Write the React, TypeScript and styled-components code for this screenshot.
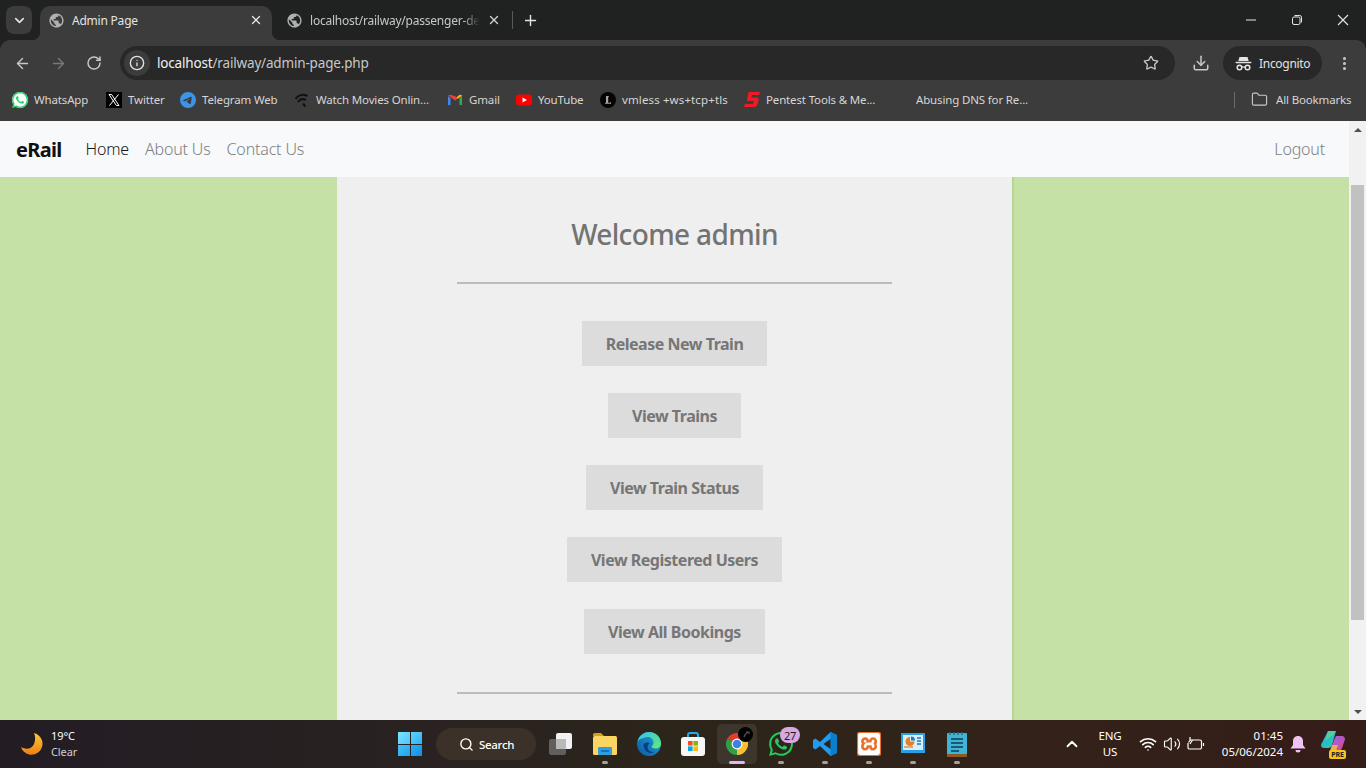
import React from 'react';
import styled, { createGlobalStyle } from 'styled-components';
import {
  ArrowLeft,
  ArrowRight,
  ChevronDown,
  ChevronUp,
  Download,
  Folder,
  Info,
  MoreVertical,
  Plus,
  RotateCw,
  Search,
  Star,
  Volume2,
  Wifi,
  X,
} from 'lucide-react';
import { MdPublic } from 'react-icons/md';
import { SiTelegram, SiWhatsapp, SiXampp } from 'react-icons/si';

const UI_FONT = '"Noto Sans", "Open Sans", sans-serif';

const GlobalStyle = createGlobalStyle`
  html, body {
    margin: 0;
    height: 100%;
    overflow: hidden;
    font-family: ${UI_FONT};
  }
  * {
    box-sizing: border-box;
  }
`;

const bookmarks = [
  { label: 'WhatsApp', width: 56, icon: <WhatsAppMark /> },
  { label: 'Twitter', width: 36, icon: <XMark /> },
  { label: 'Telegram Web', width: 76, icon: <SiTelegram size={16} color="#3a95e6" /> },
  { label: 'Watch Movies Onlin...', width: 115, icon: <WaveMark /> },
  { label: 'Gmail', width: 31, icon: <GmailMark /> },
  { label: 'YouTube', width: 46, icon: <YoutubeMark /> },
  { label: 'vmless +ws+tcp+tls', width: 106, track: 0.12, icon: <LetterMark /> },
  { label: 'Pentest Tools & Me...', width: 112, icon: <FiveMark /> },
  { label: 'Abusing DNS for Re...', width: 114, icon: <BlankMark /> },
];

const menuItems = [
  'Release New Train',
  'View Trains',
  'View Train Status',
  'View Registered Users',
  'View All Bookings',
];

export default function App() {
  return (
    <>
      <GlobalStyle />
      <Screen>
        <TabStrip>
          <TabSearch>
            <ChevronDown size={15} strokeWidth={2.6} color="#e3e3e3" />
          </TabSearch>
          <ActiveTab>
            <MdPublic size={17} color="#aeb0b2" />
            <TabTitle $active>Admin Page</TabTitle>
            <X size={14} strokeWidth={2.2} color="#e3e3e3" />
          </ActiveTab>
          <InactiveTab>
            <MdPublic size={17} color="#aeb0b2" />
            <TabTitle>localhost/railway/passenger-de</TabTitle>
            <X size={14} strokeWidth={2.2} color="#d8d8d8" />
          </InactiveTab>
          <TabDivider />
          <NewTab>
            <Plus size={17} strokeWidth={2} color="#e3e3e3" />
          </NewTab>
          <WindowControls>
            <WindowButton>
              <svg width="12" height="12" viewBox="0 0 12 12">
                <path d="M1 6h10" stroke="#e6e6e6" strokeWidth="1" />
              </svg>
            </WindowButton>
            <WindowButton>
              <svg width="12" height="12" viewBox="0 0 12 12" fill="none" stroke="#e6e6e6">
                <rect x="1.5" y="3" width="7.5" height="7.5" rx="1.5" />
                <path d="M3.5 1.5h5.2a1.8 1.8 0 0 1 1.8 1.8v5.2" />
              </svg>
            </WindowButton>
            <WindowButton>
              <svg width="12" height="12" viewBox="0 0 12 12">
                <path d="M1 1l10 10M11 1L1 11" stroke="#e6e6e6" strokeWidth="1.1" />
              </svg>
            </WindowButton>
          </WindowControls>
        </TabStrip>

        <Toolbar>
          <NavIcons>
            <ArrowLeft size={17} strokeWidth={2} color="#c7c7c7" />
            <ArrowRight size={17} strokeWidth={2} color="#787878" />
            <RotateCw size={16} strokeWidth={2.2} color="#c7c7c7" />
          </NavIcons>
          <Omnibox>
            <SiteInfo>
              <Info size={16} strokeWidth={2} color="#e3e3e3" />
            </SiteInfo>
            <UrlText>
              localhost<UrlDim>/railway/admin-page.php</UrlDim>
            </UrlText>
            <Star size={16} strokeWidth={2} color="#c7c7c7" />
          </Omnibox>
          <DownloadSlot>
            <Download size={18} strokeWidth={2} color="#c7c7c7" />
          </DownloadSlot>
          <IncognitoPill>
            <IncognitoMark />
            Incognito
          </IncognitoPill>
          <KebabSlot>
            <MoreVertical size={17} strokeWidth={2.4} color="#c7c7c7" />
          </KebabSlot>
        </Toolbar>

        <BookmarksBar>
          {bookmarks.map((b) => (
            <Bookmark key={b.label}>
              {b.icon}
              <BookmarkLabel $width={b.width} $track={b.track}>
                {b.label}
              </BookmarkLabel>
            </Bookmark>
          ))}
          <BookmarksEnd>
            <BarDivider />
            <Folder size={17} strokeWidth={1.6} color="#c7c7c7" />
            <BookmarkLabel $width={75}>All Bookmarks</BookmarkLabel>
          </BookmarksEnd>
        </BookmarksBar>

        <Viewport>
          <Page>
            <Navbar>
              <Brand>eRail</Brand>
              <NavLink $active>Home</NavLink>
              <NavLink>About Us</NavLink>
              <NavLink>Contact Us</NavLink>
              <LogoutLink>Logout</LogoutLink>
            </Navbar>
            <Main>
              <Panel>
                <Welcome>Welcome admin</Welcome>
                <Rule />
                <Menu>
                  {menuItems.map((item) => (
                    <MenuButton key={item}>{item}</MenuButton>
                  ))}
                </Menu>
                <Rule />
              </Panel>
            </Main>
          </Page>
          <Scrollbar>
            <ScrollArrow $up />
            <ScrollTrack>
              <ScrollThumb />
            </ScrollTrack>
            <ScrollArrow />
          </Scrollbar>
        </Viewport>

        <Taskbar>
          <Weather>
            <MoonMark />
            <WeatherText>
              <span>19°C</span>
              <WeatherSub>Clear</WeatherSub>
            </WeatherText>
          </Weather>
          <TaskCenter>
            <StartMark />
            <SearchPill>
              <Search size={15} strokeWidth={2.2} color="#fff" />
              Search
            </SearchPill>
            <TaskIcon>
              <TaskViewMark />
            </TaskIcon>
            <TaskIcon $running>
              <ExplorerMark />
            </TaskIcon>
            <TaskIcon>
              <EdgeMark />
            </TaskIcon>
            <TaskIcon>
              <StoreMark />
            </TaskIcon>
            <TaskIcon $running $focused>
              <ChromeMark />
              <IncognitoBadge>
                <svg width="12" height="12" viewBox="0 0 12 12">
                  <path d="M4 8c1-3 2-4 4-5M6 3h3v2" stroke="#555" strokeWidth="1.2" fill="none" />
                </svg>
              </IncognitoBadge>
            </TaskIcon>
            <TaskIcon $running>
              <SiWhatsapp size={24} color="#25c95f" />
              <CountBadge>27</CountBadge>
            </TaskIcon>
            <TaskIcon $running>
              <CodeMark />
            </TaskIcon>
            <TaskIcon $running>
              <XamppTile>
                <SiXampp size={22} color="#fff" />
              </XamppTile>
            </TaskIcon>
            <TaskIcon $running>
              <PanelMark />
            </TaskIcon>
            <TaskIcon $running>
              <NotepadMark />
            </TaskIcon>
          </TaskCenter>
          <Tray>
            <ChevronUp size={18} strokeWidth={2.4} color="#fff" />
            <LangBlock>
              <span>ENG</span>
              <span>US</span>
            </LangBlock>
            <TrayIcons>
              <Wifi size={18} strokeWidth={2.2} color="#fff" />
              <Volume2 size={18} strokeWidth={1.5} color="#fff" />
              <BatteryMark />
            </TrayIcons>
            <Clock>
              <span>01:45</span>
              <span>05/06/2024</span>
            </Clock>
            <BellSlot>
              <BellMark />
            </BellSlot>
            <CopilotSlot>
              <CopilotMark />
              <PreTag>PRE</PreTag>
            </CopilotSlot>
          </Tray>
        </Taskbar>
      </Screen>
    </>
  );
}

function WhatsAppMark() {
  return (
    <WhatsAppBack>
      <SiWhatsapp size={16} color="#25d366" />
    </WhatsAppBack>
  );
}

function XMark() {
  return (
    <svg width="16" height="16" viewBox="0 0 16 16">
      <rect width="16" height="16" fill="#000" />
      <path d="M3 2.5h2.6l7.4 11h-2.6zM12.5 2.5L3.5 13.5" stroke="#fff" strokeWidth="1" fill="none" />
    </svg>
  );
}

function WaveMark() {
  return (
    <svg width="16" height="16" viewBox="0 0 16 16" fill="none" stroke="#111" strokeWidth="2">
      <path d="M1.5 7c3-4.5 8-5 12-3" />
      <path d="M4 10c2-3 5-3.5 8-2" />
      <path d="M9 11.5l2.5 3" />
    </svg>
  );
}

function GmailMark() {
  return (
    <svg width="16" height="16" viewBox="0 0 16 16">
      <path d="M1 4v9h2.5V6.5z" fill="#4285f4" />
      <path d="M15 4v9h-2.5V6.5z" fill="#34a853" />
      <path d="M1 3.2L8 8.5l2-1.5V5L3.5 2.8z" fill="#ea4335" />
      <path d="M15 3.2L12.5 2.8 10 5v2l5-3z" fill="#fbbc04" />
    </svg>
  );
}

function YoutubeMark() {
  return (
    <svg width="16" height="16" viewBox="0 0 16 16">
      <rect y="2.5" width="16" height="11" rx="3" fill="#f00" />
      <path d="M6.5 5.5v5L11 8z" fill="#fff" />
    </svg>
  );
}

function LetterMark() {
  return (
    <svg width="16" height="16" viewBox="0 0 16 16">
      <circle cx="8" cy="8" r="8" fill="#050505" />
      <path d="M6 4h3v.8H8.2v6h2l.8-1.3v2.3H5v-1h1z" fill="#a5a5a5" />
    </svg>
  );
}

function FiveMark() {
  return (
    <svg width="16" height="17" viewBox="0 0 16 17">
      <path
        d="M4.5 1H16l-1 3H8l-.6 2.5H13c1.5 0 2 1 1.6 2.5l-1.2 4.5C13 15 12 16 10.5 16H0l1-3h8l.6-3H3z"
        fill="#ed1c24"
      />
    </svg>
  );
}

function BlankMark() {
  return <BlankIcon />;
}

function IncognitoMark() {
  return (
    <svg width="17" height="17" viewBox="0 0 17 17" fill="#e3e3e3">
      <path d="M4.5 2h8l1.2 4H3.3z" />
      <rect x="0.5" y="6.8" width="16" height="1.5" rx=".7" />
      <circle cx="4.5" cy="12.5" r="2.3" fill="none" stroke="#e3e3e3" strokeWidth="1.5" />
      <circle cx="12.5" cy="12.5" r="2.3" fill="none" stroke="#e3e3e3" strokeWidth="1.5" />
      <path d="M6.8 12h3.4" stroke="#e3e3e3" strokeWidth="1.2" />
    </svg>
  );
}

function MoonMark() {
  return (
    <svg width="24" height="24" viewBox="0 0 24 24">
      <defs>
        <linearGradient id="moon" x1="0" y1="0" x2="0" y2="1">
          <stop offset="0" stopColor="#fdc83a" />
          <stop offset="1" stopColor="#ee8012" />
        </linearGradient>
      </defs>
      <path d="M14 1a11 11 0 1 1-13 14c5 3 11 2 13-3 1.5-4 1.5-8 0-11z" fill="url(#moon)" />
    </svg>
  );
}

function StartMark() {
  return (
    <StartGrid>
      <StartPane $from="#7fe3ff" $to="#4cc4f7" />
      <StartPane $from="#5fd2fb" $to="#2eb2f3" />
      <StartPane $from="#43c0f6" $to="#1fa4f0" />
      <StartPane $from="#2eaef3" $to="#0f8fea" />
    </StartGrid>
  );
}

function TaskViewMark() {
  return (
    <svg width="26" height="24" viewBox="0 0 26 24">
      <rect x="1" y="7" width="17" height="16" rx="2" fill="#5f5f5f" />
      <rect x="8" y="1" width="16" height="16" rx="2" fill="#f1f1f1" />
      <rect x="8" y="7" width="10" height="10" fill="#b9b9b9" />
    </svg>
  );
}

function ExplorerMark() {
  return (
    <svg width="26" height="24" viewBox="0 0 26 24">
      <path d="M1 3a2 2 0 0 1 2-2h6l3 3H1z" fill="#d99f12" />
      <rect x="1" y="4" width="24" height="19" rx="1.5" fill="#fbd561" />
      <rect x="6" y="15" width="14" height="8" rx="1" fill="#2f9fe0" />
      <rect x="9" y="18" width="8" height="2" fill="#1a6fb8" />
    </svg>
  );
}

function EdgeMark() {
  return (
    <svg width="26" height="26" viewBox="0 0 26 26">
      <defs>
        <linearGradient id="edgeA" x1="0" y1="1" x2="1" y2="0">
          <stop offset="0" stopColor="#0c59a4" />
          <stop offset="1" stopColor="#1fa6d8" />
        </linearGradient>
        <linearGradient id="edgeB" x1="0" y1="0" x2="1" y2="1">
          <stop offset="0" stopColor="#35c1f1" />
          <stop offset="1" stopColor="#66eb6e" />
        </linearGradient>
      </defs>
      <circle cx="13" cy="13" r="12" fill="url(#edgeA)" />
      <path d="M1.5 11C3 4 9 1 13 1c7 0 12 5.5 12 11.5 0 3-2.5 5-5.5 5-2 0-4-1-4-2 1-.5 2-2 2-4 0-3-3-6-6-5.500C8 6.5 3 7.5 1.5 11z" fill="url(#edgeB)" />
      <path d="M7.5 14c0 5 4 8 7 8 1 0 2.5-.3 3.5-1-4 0-6.5-2-6.5-5 0-2 1-3 2.5-4-3-1.5-6.5 0-6.500 2z" fill="#0a3f7e" />
    </svg>
  );
}

function StoreMark() {
  return (
    <svg width="24" height="26" viewBox="0 0 24 26">
      <path d="M7 7V4a2 2 0 0 1 2-2h6a2 2 0 0 1 2 2v3" fill="none" stroke="#28a8ea" strokeWidth="2" />
      <rect x="0" y="6" width="24" height="19" rx="3" fill="#f7f7f7" />
      <rect x="7" y="10" width="4.6" height="4.6" fill="#f25022" />
      <rect x="12.4" y="10" width="4.6" height="4.6" fill="#7fba00" />
      <rect x="7" y="15.4" width="4.6" height="4.6" fill="#00a4ef" />
      <rect x="12.4" y="15.4" width="4.6" height="4.6" fill="#ffb900" />
    </svg>
  );
}

function ChromeMark() {
  return (
    <svg width="24" height="24" viewBox="0 0 24 24">
      <path d="M12 12L2.47 6.5A11 11 0 0 1 21.53 6.5z" fill="#e33b2e" />
      <path d="M12 12L21.53 6.5A11 11 0 0 1 12 23z" fill="#fbc02d" />
      <path d="M12 12L12 23A11 11 0 0 1 2.47 6.5z" fill="#2f9e44" />
      <circle cx="12" cy="12" r="5.4" fill="#fff" />
      <circle cx="12" cy="12" r="4.3" fill="#3b82e6" />
    </svg>
  );
}

function CodeMark() {
  return (
    <svg width="24" height="24" viewBox="0 0 24 24">
      <path d="M17.5 0L24 3v18l-6.5 3L7 14l-4.5 3.5L0 16V8l2.5-1.5L7 10z" fill="#1f9cf0" />
      <path d="M17.5 0L24 3v18l-6.5 3z" fill="#0a7fcf" />
      <path d="M17.5 7v10L10.5 12z" fill="#2b2419" />
    </svg>
  );
}

function PanelMark() {
  return (
    <svg width="24" height="22" viewBox="0 0 24 22">
      <rect width="24" height="20" fill="#2b9fe3" />
      <rect x="2" y="2" width="20" height="15" fill="#d7effa" />
      <path d="M9 4a4.5 4.5 0 1 0 4.5 4.5H9z" fill="#ea7d28" />
      <path d="M10 3.5a4 4 0 0 1 4 4h-4z" fill="#2377bc" />
      <path d="M16 5h4M16 8h4M16 11h4" stroke="#2377bc" strokeWidth="1.3" />
      <path d="M3 14h9" stroke="#ea7d28" strokeWidth="1.3" />
    </svg>
  );
}

function NotepadMark() {
  return (
    <svg width="20" height="25" viewBox="0 0 20 25">
      <rect y="1" width="20" height="24" rx="1" fill="#3fb4d6" />
      <rect y="22" width="20" height="3" fill="#8a5a22" />
      <path d="M4 7h12M4 11h12M4 15h12M4 19h8" stroke="#0e3d58" strokeWidth="1.6" />
      <path d="M3 0v3M7 0v3M11 0v3M15 0v3" stroke="#1c6d8a" strokeWidth="1.4" />
    </svg>
  );
}

function BatteryMark() {
  return (
    <svg width="18" height="18" viewBox="0 0 18 18" fill="none" stroke="#fff" strokeWidth="1.2">
      <path d="M3 5h10a1.5 1.5 0 0 1 1.5 1.5v6a1.5 1.5 0 0 1-1.5 1.5H2.5A1.5 1.5 0 0 1 1 12.5V8" />
      <path d="M16.5 8v3" />
      <path d="M3 2v3.5L1.5 7.5M5.5 5L3 9" />
    </svg>
  );
}

function BellMark() {
  return (
    <svg width="16" height="18" viewBox="0 0 16 18" fill="#f0c4f2">
      <path d="M8 1c3 0 5 2.3 5 5v4l2.5 3.5H.5L3 10V6c0-2.700 2-5 5-5z" />
      <path d="M5.5 15h5a2.5 2.5 0 0 1-5 0z" />
    </svg>
  );
}

function CopilotMark() {
  return (
    <svg width="24" height="22" viewBox="0 0 24 22">
      <defs>
        <linearGradient id="copA" x1="0" y1="0" x2="1" y2="1">
          <stop offset="0" stopColor="#1fa8e8" />
          <stop offset="1" stopColor="#33d0a5" />
        </linearGradient>
        <linearGradient id="copB" x1="0" y1="0" x2="1" y2="1">
          <stop offset="0" stopColor="#8d6be8" />
          <stop offset="1" stopColor="#e6428f" />
        </linearGradient>
      </defs>
      <path d="M7 0h8l-4 14c-.5 2-2 3-4 3H3C.5 17-.5 15 .3 13z" fill="url(#copA)" />
      <path d="M15 5h6c2 0 3.5 2 2.8 4L21 17c-.7 2-2 3-4 3h-8l4-11z" fill="url(#copB)" />
      <path d="M7 0h8l-3 4-8 6z" fill="#76e07a" opacity=".55" />
      <path d="M9 20l2-6h6l-2 6z" fill="#f5c33a" opacity=".8" />
    </svg>
  );
}

const Screen = styled.div`
  width: 1366px;
  height: 768px;
  display: flex;
  flex-direction: column;
  background: #202221;
  overflow: hidden;
`;

const TabStrip = styled.div`
  height: 40px;
  display: flex;
  align-items: flex-end;
  padding-left: 6px;
  background: #202221;
`;

const TabSearch = styled.div`
  width: 26px;
  height: 28px;
  margin: 0 8px 6px 0;
  display: flex;
  align-items: center;
  justify-content: center;
  border-radius: 8px;
  background: #3c3c3c;
`;

const ActiveTab = styled.div`
  position: relative;
  width: 232px;
  height: 34px;
  display: flex;
  align-items: center;
  gap: 7px;
  padding: 0 9px 6px 8px;
  border-radius: 10px 10px 0 0;
  background: #3c3c3c;

  &::before,
  &::after {
    content: '';
    position: absolute;
    bottom: 0;
    width: 8px;
    height: 8px;
  }
  &::before {
    left: -8px;
    background: radial-gradient(circle at 0 0, transparent 8px, #3c3c3c 8.5px);
  }
  &::after {
    right: -8px;
    background: radial-gradient(circle at 100% 0, transparent 8px, #3c3c3c 8.5px);
  }
`;

const InactiveTab = styled.div`
  width: 241px;
  height: 34px;
  display: flex;
  align-items: center;
  gap: 7px;
  padding: 0 12px 6px 14px;
`;

const TabTitle = styled.span<{ $active?: boolean }>`
  flex: 1;
  min-width: 0;
  overflow: hidden;
  white-space: nowrap;
  font-size: 12px;
  letter-spacing: -0.22px;
  color: ${({ $active }) => ($active ? '#e3e3e3' : '#c7c7c7')};
  mask-image: ${({ $active }) => ($active ? 'none' : 'linear-gradient(90deg, #000 90%, transparent)')};
`;

const TabDivider = styled.div`
  width: 1px;
  height: 18px;
  margin: 0 0 11px -1px;
  background: #5a5a5a;
`;

const NewTab = styled.div`
  width: 34px;
  height: 34px;
  display: flex;
  align-items: center;
  justify-content: center;
  padding-bottom: 6px;
`;

const WindowControls = styled.div`
  margin-left: auto;
  align-self: stretch;
  display: flex;
  align-items: center;
`;

const WindowButton = styled.div`
  width: 46px;
  height: 40px;
  display: flex;
  align-items: center;
  justify-content: center;
`;

const Toolbar = styled.div`
  height: 40px;
  display: flex;
  align-items: flex-end;
  background: #3c3c3c;
  border-radius: 10px 10px 0 0;
`;

const NavIcons = styled.div`
  width: 120px;
  height: 34px;
  display: flex;
  align-items: center;
  gap: 19px;
  padding-left: 14px;
`;

const Omnibox = styled.div`
  width: 1055px;
  height: 34px;
  display: flex;
  align-items: center;
  padding: 0 16px 0 4px;
  border-radius: 17px;
  background: #282828;
`;

const SiteInfo = styled.div`
  width: 26px;
  height: 26px;
  display: flex;
  align-items: center;
  justify-content: center;
  border-radius: 50%;
  background: #3c3c3c;
`;

const UrlText = styled.span`
  flex: 1;
  margin-left: 7px;
  font-size: 13.5px;
  letter-spacing: -0.17px;
  color: #f1f1f1;
`;

const UrlDim = styled.span`
  color: #c7c7c7;
`;

const DownloadSlot = styled.div`
  width: 48px;
  height: 34px;
  margin-left: 2px;
  display: flex;
  align-items: center;
  justify-content: center;
`;

const IncognitoPill = styled.div`
  width: 99px;
  height: 34px;
  margin-left: -2px;
  display: flex;
  align-items: center;
  gap: 7px;
  padding-left: 12px;
  border-radius: 17px;
  background: #282828;
  font-size: 12px;
  letter-spacing: -0.3px;
  color: #e3e3e3;
`;

const KebabSlot = styled.div`
  width: 44px;
  height: 34px;
  display: flex;
  align-items: center;
  justify-content: center;
`;

const BookmarksBar = styled.div`
  height: 41px;
  display: flex;
  align-items: center;
  gap: 16px;
  padding: 0 15px 2px 12px;
  background: #3c3c3c;
`;

const Bookmark = styled.div`
  display: flex;
  align-items: center;
  gap: 6px;
`;

const BookmarkLabel = styled.span<{ $width: number; $track?: number }>`
  width: ${({ $width }) => $width}px;
  white-space: nowrap;
  font-size: 11.5px;
  letter-spacing: ${({ $track }) => $track ?? -0.15}px;
  color: #d6d6d6;
`;

const BookmarksEnd = styled.div`
  margin-left: auto;
  display: flex;
  align-items: center;
  gap: 8px;
`;

const BarDivider = styled.div`
  width: 1px;
  height: 16px;
  margin-right: 8px;
  background: #6a6a6a;
`;

const WhatsAppBack = styled.span`
  width: 16px;
  height: 16px;
  display: flex;
  border-radius: 50%;
  background: #fff;
`;

const BlankIcon = styled.span`
  width: 16px;
  height: 16px;
`;

const Viewport = styled.div`
  height: 599px;
  display: flex;
`;

const Page = styled.div`
  flex: 1;
  display: flex;
  flex-direction: column;
`;

const Navbar = styled.nav`
  height: 56px;
  display: flex;
  align-items: center;
  padding: 0 24px 0 16px;
  background: #f8f9fa;
`;

const Brand = styled.span`
  margin-right: 24px;
  font-size: 20px;
  font-weight: 700;
  letter-spacing: -0.7px;
  color: #111;
`;

const NavLink = styled.span<{ $active?: boolean }>`
  margin-right: 16px;
  font-size: 16px;
  letter-spacing: -0.17px;
  font-weight: 300;
  color: ${({ $active }) => ($active ? '#15191d' : '#7d7e80')};
`;

const LogoutLink = styled(NavLink)`
  margin: 0 0 0 auto;
`;

const Main = styled.main`
  flex: 1;
  min-height: 0;
  padding-left: 337px;
  background: #c5e1a5;
`;

const Panel = styled.section`
  width: 677px;
  height: 100%;
  padding: 34px 120px 0;
  background: #efefef;
  border-right: 2px solid #b4d68e;
`;

const Welcome = styled.h2`
  margin: 0 0 25px;
  text-align: center;
  font-size: 28px;
  line-height: 46px;
  font-weight: 500;
  letter-spacing: -0.65px;
  color: #737373;
`;

const Rule = styled.hr`
  width: 435px;
  height: 2px;
  margin: 0;
  border: 0;
  background: #bcbcbc;
`;

const Menu = styled.div`
  display: flex;
  flex-direction: column;
  align-items: center;
  gap: 27px;
  padding: 37px 0 38px;
`;

const MenuButton = styled.div`
  height: 45px;
  display: flex;
  align-items: center;
  padding: 0 24px;
  background: #dcdcdc;
  font-size: 16px;
  font-weight: 700;
  letter-spacing: -0.48px;
  color: #767676;
`;

const Scrollbar = styled.div`
  width: 17px;
  display: flex;
  flex-direction: column;
  align-items: center;
  background: #f1f1f1;
`;

const ScrollArrow = styled.div<{ $up?: boolean }>`
  width: 17px;
  height: 17px;
  display: flex;
  align-items: center;
  justify-content: center;

  &::before {
    content: '';
    border-left: 4px solid transparent;
    border-right: 4px solid transparent;
    ${({ $up }) => ($up ? 'border-bottom: 4px solid #505050;' : 'border-top: 4px solid #505050;')}
  }
`;

const ScrollTrack = styled.div`
  flex: 1;
  width: 100%;
  padding: 47px 2px 0;
`;

const ScrollThumb = styled.div`
  height: 435px;
  background: #c1c1c1;
`;

const Taskbar = styled.footer`
  height: 48px;
  position: relative;
  display: flex;
  align-items: center;
  background: linear-gradient(90deg, #231c24 0%, #2a2320 35%, #2c2519 50%, #33221a 75%, #351c18 100%);
  color: #fff;
`;

const Weather = styled.div`
  width: 400px;
  display: flex;
  align-items: center;
  gap: 7px;
  padding-left: 20px;
`;

const WeatherText = styled.div`
  display: flex;
  flex-direction: column;
  font-size: 11px;
  line-height: 16px;
  letter-spacing: -0.1px;
`;

const WeatherSub = styled.span`
  color: #d0d0d0;
`;

const TaskCenter = styled.div`
  display: flex;
  align-items: center;
`;

const StartGrid = styled.div`
  width: 24px;
  height: 24px;
  margin: 0 14px 0 -2px;
  display: grid;
  grid-template-columns: 1fr 1fr;
  gap: 1px;
`;

const StartPane = styled.span<{ $from: string; $to: string }>`
  background: linear-gradient(135deg, ${({ $from }) => $from}, ${({ $to }) => $to});
`;

const SearchPill = styled.div`
  width: 100px;
  height: 32px;
  margin-right: 3px;
  display: flex;
  align-items: center;
  gap: 5px;
  padding-left: 23px;
  border-radius: 16px;
  background: #3b3128;
  font-size: 11.5px;
  font-weight: 500;
  letter-spacing: -0.3px;
`;

const TaskIcon = styled.div<{ $running?: boolean; $focused?: boolean }>`
  position: relative;
  width: 40px;
  height: 40px;
  margin: 0 2px;
  display: flex;
  align-items: center;
  justify-content: center;
  border-radius: 5px;
  background: ${({ $focused }) => ($focused ? '#3d362d' : 'transparent')};

  &::after {
    content: '';
    display: ${({ $running }) => ($running ? 'block' : 'none')};
    position: absolute;
    left: 50%;
    bottom: 0;
    transform: translateX(-50%);
    width: ${({ $focused }) => ($focused ? '16px' : '6px')};
    height: 3px;
    border-radius: 2px;
    background: ${({ $focused }) => ($focused ? '#e5b5ef' : '#a5a19b')};
  }
`;

const IncognitoBadge = styled.span`
  position: absolute;
  top: 3px;
  right: 4px;
  width: 15px;
  height: 15px;
  display: flex;
  align-items: center;
  justify-content: center;
  border-radius: 50%;
  background: #000;
`;

const CountBadge = styled.span`
  position: absolute;
  top: 3px;
  right: 1px;
  width: 20px;
  height: 16px;
  display: flex;
  align-items: center;
  justify-content: center;
  border-radius: 8px;
  background: #d8a9e0;
  color: #1e1a20;
  font-size: 11px;
  letter-spacing: -0.2px;
`;

const XamppTile = styled.div`
  width: 24px;
  height: 24px;
  display: flex;
  align-items: center;
  justify-content: center;
  border-radius: 2px;
  background: #e8702a;
`;

const Tray = styled.div`
  position: absolute;
  top: 0;
  right: 0;
  height: 48px;
  display: flex;
  align-items: center;
  padding-right: 21px;
`;

const LangBlock = styled.div`
  width: 40px;
  margin-left: 9px;
  display: flex;
  flex-direction: column;
  align-items: center;
  font-size: 11.5px;
  line-height: 16px;
  letter-spacing: -0.1px;
`;

const TrayIcons = styled.div`
  display: flex;
  align-items: center;
  gap: 6px;
  margin-left: 9px;
`;

const Clock = styled.div`
  width: 76px;
  margin-left: 2px;
  display: flex;
  flex-direction: column;
  align-items: flex-end;
  font-size: 11.5px;
  line-height: 16px;
`;

const BellSlot = styled.div`
  width: 16px;
  height: 18px;
  margin-left: 7px;
`;

const CopilotSlot = styled.div`
  position: relative;
  width: 24px;
  height: 26px;
  margin-left: 15px;
`;

const PreTag = styled.span`
  position: absolute;
  right: -1px;
  bottom: -2px;
  height: 9px;
  padding: 0 2px;
  border-radius: 2px;
  background: #f5c518;
  color: #222;
  font-size: 7px;
  line-height: 9px;
  font-weight: 700;
`;
